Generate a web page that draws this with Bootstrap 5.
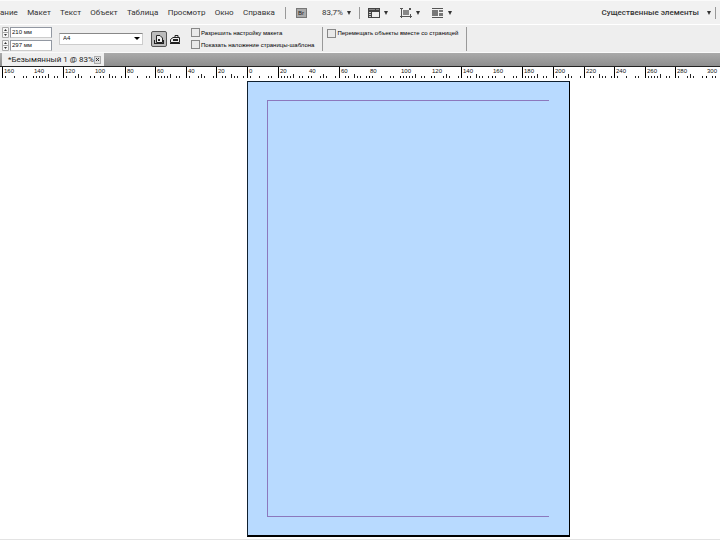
<!DOCTYPE html>
<html lang="ru">
<head>
<meta charset="utf-8">
<meta name="viewport" content="width=device-width, initial-scale=1">
<title>Безымянный 1</title>
<link href="https://cdn.jsdelivr.net/npm/bootstrap@5.3.0/dist/css/bootstrap.min.css" rel="stylesheet">
<style>
body{font:8px/12px Roboto,"Noto Sans",sans-serif;color:#333;background:#fff}
.menubar{height:25px;background:#f1f1f1;border-top:1px solid #fafafa;border-bottom:1px solid #fff}
.menubar a,.menubar button{color:#333;text-decoration:none;font-size:8px;line-height:12px}
.menus{width:275px;justify-content:space-between}
.plain{border:0;background:none;padding:0;display:flex;align-items:center}
.caret{width:0;height:0;border:2px solid transparent;border-top:4px solid #333;border-bottom:0}
.rule{width:1px;height:12px;background:#999}
.bridge{margin-left:10px}
.zoom-level{margin-left:15px}
.view-tools{gap:12px}
.workspace{font-weight:500}
.controls{height:28px;background:#eee;border-bottom:1px solid #fafafa}
.size-list{gap:2px;margin-left:2px}
.size-row{gap:1px}
.field{height:11px;width:42px;border:1px solid #9298a2;border-bottom-color:#ccc;background:#fff;font:6px/9px "Liberation Sans",sans-serif;padding:0 1px;color:#111;border-radius:0}
.spin{width:7px;height:11px}
.format{width:84px;height:12px;border:1px solid #ccc;border-top-color:#888;background:#fff;font:6px/9px "Liberation Sans",sans-serif;padding:0 3px;color:#111;appearance:none;border-radius:0}
.format-wrap{margin-left:7px}
.format-wrap .caret{position:absolute;right:3px;top:4px;border-width:3px 3px 0;border-top-color:#000}
.orient{width:16px;height:16px;border:1px solid transparent}
.orient.active{border-color:#555;background:#bbb;border-radius:2px}
.checks{font:6px/10px "Liberation Sans",sans-serif;color:#000}
.checks label{gap:1px;height:12px;white-space:nowrap}
.tick{appearance:none;width:9px;height:9px;margin:0;border:1px solid #888;background:#e9e9e9;flex:none}
.move-option{padding-top:2px}
.split{width:1px;height:24px;background:#999}
.tabs{height:13px;background:linear-gradient(#aaa,#8e8e8e)}
.doc-tab{background:#efefef;height:13px;margin-left:2px;width:102px;padding-left:6px;padding-right:4px;color:#222}
.doc-tab .plain{width:7px;height:8px;border:1px solid #aaa;background:#ddd;justify-content:center}
.ruler{display:block;border-top:1px solid #222;background:#fff}
.ruler text{font:6px "Liberation Sans",sans-serif;fill:#111}
.board{padding:3px 0 2px 247px}
.sheet{width:323px;height:456px;background:#b8daff;border:1px solid #102030;border-right-color:#000;border-bottom:2px solid #000;padding:18px 20px 18px 19px}
.guide{height:417px;border:1px solid #8c78bd;border-right:0}
.footline{height:1px;background:#e3e3e3}
</style>
<script src="https://cdn.jsdelivr.net/npm/bootstrap@5.3.0/dist/js/bootstrap.bundle.min.js"></script>
</head>
<body class="overflow-hidden">
<header class="menubar d-flex align-items-center">
  <nav class="menus d-flex flex-shrink-0 text-nowrap"><a href="#">ание</a><a href="#">Макет</a><a href="#">Текст</a><a href="#">Объект</a><a href="#">Таблица</a><a href="#">Просмотр</a><a href="#">Окно</a><a href="#">Справка</a></nav>
  <span class="rule bridge"></span>
  <button class="plain bridge" aria-label="Bridge"><svg width="11" height="10"><rect x=".5" y=".5" width="10" height="9" fill="#aaa" stroke="#777"/><text x="2" y="7" font-size="6" font-family="Liberation Sans, sans-serif" fill="#222">Br</text></svg></button>
  <button class="plain gap-1 zoom-level">83,7%<span class="caret"></span></button>
  <span class="rule mx-2"></span>
  <div class="view-tools d-flex me-auto">
    <button class="plain gap-1" aria-label="Параметры просмотра"><svg width="12" height="10" shape-rendering="crispEdges"><path d="M0 0H12V10H0Z" fill="#444"/><path d="M4 4H11V9H4Z" fill="#eee"/><path d="M1 4H3V5H1ZM1 6H3V7H1ZM1 8H3V9H1Z" fill="#ccc"/><path d="M1 1H7V2H1ZM8 1H11V2H8Z" fill="#888"/></svg><span class="caret"></span></button>
    <button class="plain gap-1" aria-label="Режим экрана"><svg width="12" height="10" shape-rendering="crispEdges"><path d="M3 2H9V7H3Z" fill="#888"/><path d="M1 0H2V10H1ZM0 8H12V9H0ZM10 6H11V10H10ZM0 0H3V1H0ZM9 0H11V2H9Z" fill="#555"/></svg><span class="caret"></span></button>
    <button class="plain gap-1" aria-label="Упорядочить документы"><svg width="12" height="10" shape-rendering="crispEdges"><path d="M0 0H11V1H0ZM0 9H11V10H0Z" fill="#555"/><path d="M0 2H6V8H0ZM7 2H11V4H7ZM7 5H11V8H7Z" fill="#777"/></svg><span class="caret"></span></button>
  </div>
  <button class="plain gap-2 text-nowrap workspace">Существенные элементы<span class="caret"></span></button>
  <span class="rule ms-1 me-1"></span>
</header>

<section class="controls d-flex align-items-center">
  <div class="size-list d-flex flex-column">
    <div class="d-flex size-row"><svg class="spin" viewBox="0 0 7 11"><path d="M.5.500H6.500V10.500H.5ZM.5 5.500H6.500" fill="#f7f7f7" stroke="#aaa"/><path d="M2 4L3.500 2L5 4ZM2 7L3.500 9L5 7Z" fill="#333"/></svg><input class="field" value="210 мм" aria-label="Ширина"></div>
    <div class="d-flex size-row"><svg class="spin" viewBox="0 0 7 11"><path d="M.5.500H6.500V10.500H.5ZM.5 5.500H6.500" fill="#f7f7f7" stroke="#aaa"/><path d="M2 4L3.500 2L5 4ZM2 7L3.500 9L5 7Z" fill="#333"/></svg><input class="field" value="297 мм" aria-label="Высота"></div>
  </div>
  <div class="format-wrap position-relative d-flex"><select class="format" aria-label="Формат"><option>A4</option></select><span class="caret"></span></div>
  <button class="plain orient active justify-content-center ms-2" aria-label="Книжная"><svg width="10" height="10"><path d="M2.500 8.500V1.500H6L8.500 4V8.500Z" fill="#eee" stroke="#222"/><path d="M0 9.500H10M.5 6V9M9.500 6V9" stroke="#222"/><path d="M4 7V5H6V7Z" fill="#222"/></svg></button>
  <button class="plain orient justify-content-center" aria-label="Альбомная"><svg width="10" height="10"><path d="M.5 8.500V5.500L3 3.500H9.500V8.500Z" fill="#eee" stroke="#222"/><path d="M3 6H8" stroke="#222" stroke-width="2"/><path d="M5 3V1.500H8V3M0 9.500H10" fill="none" stroke="#222"/></svg></button>
  <div class="checks ms-2">
    <label class="d-flex align-items-center"><input class="tick" type="checkbox">Разрешить настройку макета</label>
    <label class="d-flex align-items-center"><input class="tick" type="checkbox">Показать наложение страницы-шаблона</label>
  </div>
  <span class="split ms-2"></span>
  <div class="checks move-option ms-1 align-self-start"><label class="d-flex align-items-center"><input class="tick" type="checkbox">Перемещать объекты вместе со страницей</label></div>
  <span class="split ms-2"></span>
</section>

<div class="tabs"><div class="doc-tab d-flex align-items-center justify-content-between text-nowrap"><span>*Безымянный 1 @ 83%</span><button class="plain" aria-label="Закрыть"><svg width="5" height="5"><path d="M1 1L4 4M4 1L1 4" stroke="#333"/></svg></button></div></div>
<svg class="ruler" width="100%" height="12" shape-rendering="crispEdges"></svg>
<main class="board"><div class="sheet"><div class="guide"></div></div></main>
<div class="footline"></div>

<script>
const zero = 247, unit = 1.53, unmarked = [-140, -100, 40, 80, 100, 120, 160, 300];
const minor = [[3,12,21,24],[3,6,9,12,15,21,24],[3,12,15,18,27],[6,9,15,18,21,27]];
let marks = '';
for (let v = -160; v <= 300; v += 20) {
  const x = Math.round(zero + v * unit), gap = unmarked.includes(v);
  marks += `<path d="M${x + .5} ${gap ? 9 : 0}V11" stroke="#000"/>`;
  marks += `<text x="${x + (gap ? 1 : 2)}" y="6">${Math.abs(v)}</text>`;
  minor[(v / 20 + 8) % 4].forEach(d => marks += `<path d="M${x + d + .5} ${d === 15 ? 7 : 9}V11" stroke="#222"/>`);
}
document.querySelector('.ruler').innerHTML = marks;
</script>
</body>
</html>
